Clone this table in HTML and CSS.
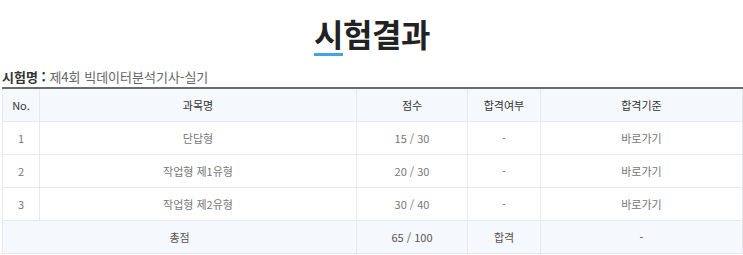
FILE: index.html
```html
<!DOCTYPE html>
<html lang="ko">
<head>
<meta charset="utf-8">
<title>시험결과</title>
<link rel="stylesheet" href="styles.css">
</head>
<body>
<div class="page">
  <h1 class="title"><span class="accent">시</span>험결과</h1>
  <p class="exam-name"><strong>시험명 :</strong> 제4회 빅데이터분석기사-실기</p>
  <table class="result">
    <colgroup>
      <col class="c-no">
      <col class="c-subject">
      <col class="c-score">
      <col class="c-pass">
      <col class="c-criteria">
    </colgroup>
    <thead>
      <tr>
        <th>No.</th>
        <th>과목명</th>
        <th>점수</th>
        <th>합격여부</th>
        <th>합격기준</th>
      </tr>
    </thead>
    <tbody>
      <tr>
        <td>1</td>
        <td>단답형</td>
        <td>15 / 30</td>
        <td>-</td>
        <td><a class="link" href="#">바로가기</a></td>
      </tr>
      <tr>
        <td>2</td>
        <td>작업형 제1유형</td>
        <td>20 / 30</td>
        <td>-</td>
        <td><a class="link" href="#">바로가기</a></td>
      </tr>
      <tr>
        <td>3</td>
        <td>작업형 제2유형</td>
        <td>30 / 40</td>
        <td>-</td>
        <td><a class="link" href="#">바로가기</a></td>
      </tr>
      <tr class="total">
        <td colspan="2">총점</td>
        <td>65 / 100</td>
        <td>합격</td>
        <td>-</td>
      </tr>
    </tbody>
  </table>
</div>
</body>
</html>
```

FILE: styles.css
```css
html, body {
  margin: 0;
  padding: 0;
  background: #ffffff;
}

body {
  font-family: "Noto Sans CJK KR", "Noto Sans", sans-serif;
  color: #333;
}

.page {
  padding: 0 1px 0 2px;
}

.title {
  margin: 0;
  padding-top: 13px;
  text-align: center;
  font-size: 32px;
  line-height: 40px;
  font-weight: 700;
  color: #222;
  letter-spacing: -0.5px;
}

.accent {
  display: inline-block;
  line-height: 34px;
  padding-bottom: 3px;
  border-bottom: 3px solid #3ea6e4;
}

.exam-name {
  margin: 12px 0 0;
  font-size: 13px;
  line-height: 18px;
  color: #666;
}

.exam-name strong {
  color: #333;
  font-weight: 700;
}

.result {
  margin-top: 1px;
  width: 740px;
  border-collapse: collapse;
  table-layout: fixed;
  border-top: 2px solid #6b6b6b;
  font-size: 11px;
}

.c-no { width: 37px; }
.c-subject { width: 317px; }
.c-score { width: 111px; }
.c-pass { width: 73px; }
.c-criteria { width: 202px; }

.result th,
.result td {
  height: 32px;
  padding: 0;
  text-align: center;
  vertical-align: middle;
  border: 1px solid #e6e9ee;
}

.result th {
  background: #f5f9fd;
  color: #333;
  font-weight: 400;
}

.result td {
  color: #777;
}

.result .total td {
  background: #f5f9fd;
  color: #555;
}

.link {
  color: #777;
  text-decoration: none;
}
```
